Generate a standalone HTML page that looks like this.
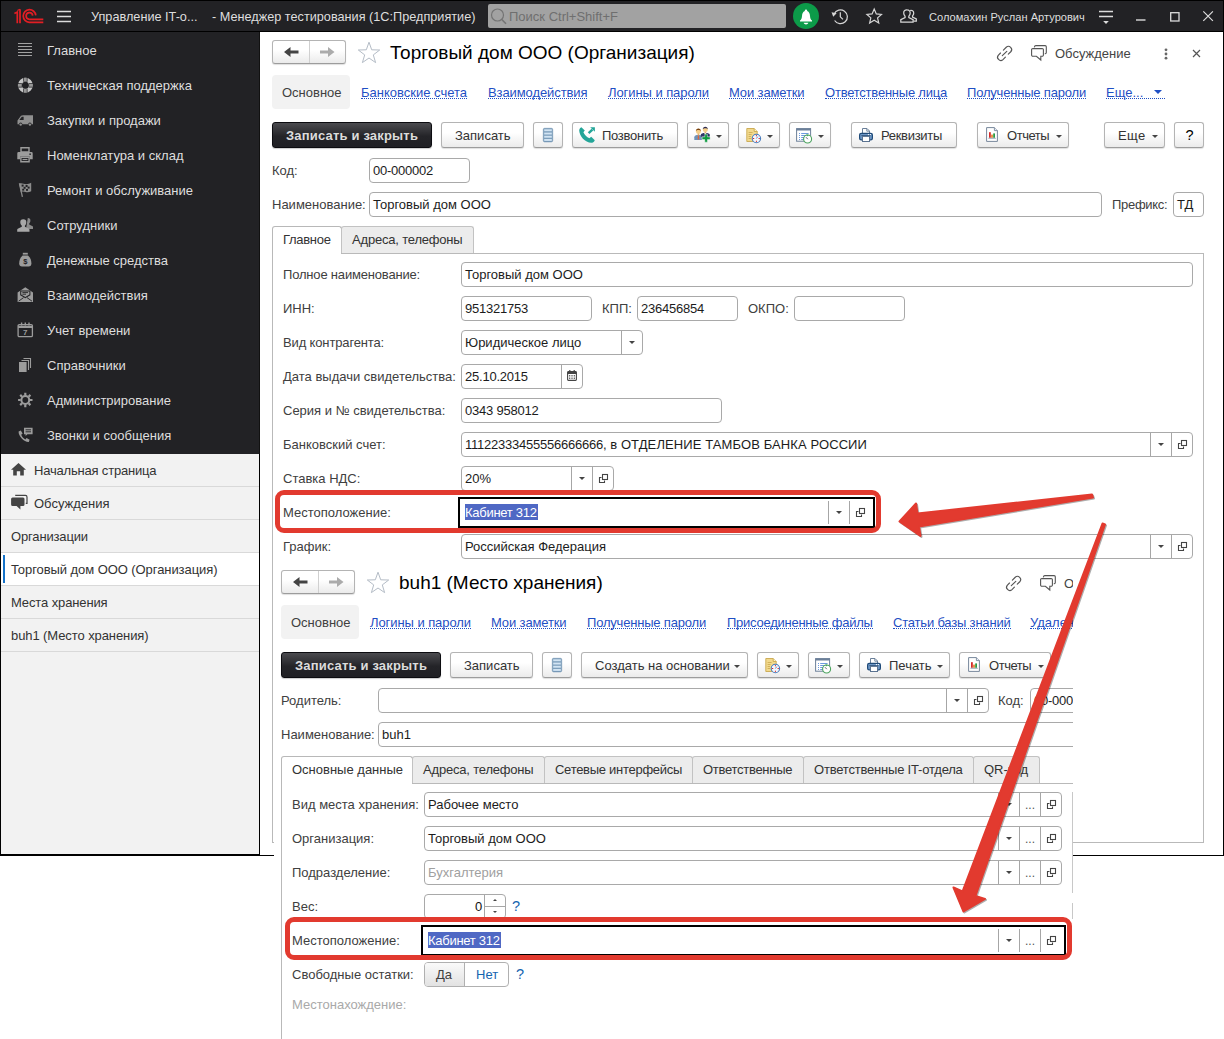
<!DOCTYPE html><html lang="ru"><head><meta charset="utf-8"><title>1C</title><style>
*{box-sizing:border-box;margin:0;padding:0}
html,body{width:1224px;height:1039px;overflow:hidden;background:#fff}
body{font-family:"Liberation Sans",sans-serif;font-size:13px;color:#333;position:relative}
.a{position:absolute;white-space:nowrap}
svg{position:absolute;overflow:visible}
.t{position:absolute;white-space:nowrap;line-height:16px;height:16px;color:#404040}
.in{position:absolute;border:1px solid #a9a9a9;border-radius:4px;background:#fff;white-space:nowrap;line-height:23px;padding-left:3px;color:#1c1c1c;overflow:hidden;height:25px}
.btn{position:absolute;border:1px solid #b4b4b4;border-bottom-color:#9c9c9c;border-radius:3px;background:linear-gradient(#ffffff 40%,#ebebeb);box-shadow:0 1px 1px rgba(0,0,0,.13);white-space:nowrap;line-height:25px;color:#333;height:26px}
.btn span{position:absolute;top:0}
.dark{background:linear-gradient(#4b4b4f,#242428 55%,#202024);border-color:#0c0c10;color:#dcdcdc;box-shadow:0 1px 1px rgba(0,0,0,.2);font-weight:bold;letter-spacing:.180px}
.lnk{position:absolute;white-space:nowrap;color:#1f4fc4;line-height:16px;border-bottom:1px dotted #1f4fc4;height:14px}
.sb{position:absolute;left:47px;color:#dedede;white-space:nowrap;line-height:16px}
.ow{position:absolute;left:1px;width:258px;height:33px;border-bottom:1px solid #d9d9d9;line-height:34px;color:#333;white-space:nowrap}
.tab{position:absolute;border:1px solid #c2c2c2;border-bottom:0;background:#ececec;line-height:26px;height:27px;color:#333;white-space:nowrap;border-radius:3px 3px 0 0;padding-left:10px}
.tab.act{background:#fff;height:28px;border-color:#b8b8b8}
.dd{position:absolute;top:0;bottom:0;width:21px;border-left:1px solid #a6a6a6}
.tri{position:absolute;width:0;height:0;border:3px solid transparent;border-top:3px solid #444;border-bottom:0}
.sel{background:#4f68c4;color:#fff;display:inline-block;line-height:17px;height:16px;padding-right:1px;letter-spacing:-.280px}
</style></head><body>
<div class="a" style="left:0;top:0;width:1224px;height:856px;background:#fff;border:1px solid #000"></div>
<div class="a" style="left:0;top:0;width:1224px;height:32px;background:#222225;border:1px solid #000"></div>
<div class="a" style="left:0;top:32px;width:260px;height:422px;background:#222225;border-right:1px solid #111;border-left:1px solid #000"></div>
<div class="a" style="left:0;top:454px;width:260px;height:402px;background:#f2f2f2;border-right:1px solid #000;border-left:1px solid #000;border-bottom:2px solid #000"></div>
<svg style="left:14px;top:9px" width="30" height="15" viewBox="0 0 30 15" ><g fill="none" stroke="#e31e24" stroke-width="1.700"><path d="M.4 4.600L3.300 3.100V14.200M6 .3V14.200"/><path d="M21.800 6.400A6.300 6.300 0 1 0 15.300 13.300H29.300"/><path d="M18.700 6.600A3.300 3.300 0 1 0 15.300 10.300H29.300"/></g><path d="M3.300 1.500L6 .3" stroke="#e31e24" stroke-width="1.200"/></svg>
<svg style="left:57px;top:10px" width="14" height="13" viewBox="0 0 14 13" ><path d="M0 1.5H14M0 6.5H14M0 11.5H14" stroke="#dcdcdc" stroke-width="1.4"/></svg>
<div class="t" style="left:91px;top:9px;color:#dedede;font-size:12.700px">Управление IT-о...</div>
<div class="t" style="left:212px;top:9px;color:#dedede;font-size:12.700px">- Менеджер тестирования (1С:Предприятие)</div>
<div class="a" style="left:488px;top:4px;width:298px;height:24px;background:#a2a2a2;border-radius:2px"></div>
<svg style="left:490px;top:7px" width="18" height="18" viewBox="0 0 18 18" ><circle cx="7.5" cy="8" r="6" fill="none" stroke="#747474" stroke-width="1.2"/><path d="M11.8 12.5L16 16.8" stroke="#747474" stroke-width="1.6"/></svg>
<div class="t" style="left:509px;top:9px;color:#6f6f6f">Поиск Ctrl+Shift+F</div>
<div class="a" style="left:793px;top:3px;width:26px;height:26px;border-radius:13px;background:#0c9b49"></div>
<svg style="left:798px;top:8.7px" width="16" height="17" viewBox="0 0 16 17" ><path d="M8 0.6c.8 0 1.2.6 1.2 1.3 2 .8 2.6 2.6 2.8 5 .2 2.2.6 3.4 2 4.6v.9H2v-.9c1.400-1.200 1.800-2.400 2-4.600.2-2.400.8-4.200 2.800-5C6.800 1.200 7.200.6 8 .6z" fill="#fff"/><path d="M5.600 13.700h4.800c-.4 1.100-1.300 1.700-2.400 1.700s-2-.6-2.400-1.700z" fill="#fff"/></svg>
<svg style="left:830.5px;top:7.5px" width="19" height="17.1" viewBox="0 0 20 18" ><g fill="none" stroke="#d6d6d6" stroke-width="1.3"><path d="M3.300 6.200A7.300 7.300 0 1 1 3.800 13.200"/><path d="M9.800 4.500V9.300L12.600 12"/></g><path d="M0.600 4.600L6 5.600 2.300 9.300z" fill="#d6d6d6"/></svg>
<svg style="left:865.8px;top:8px" width="16.4" height="15.5" viewBox="0 0 18 17" ><path d="M9 1.200l2.300 5.300 5.700.5-4.300 3.800 1.300 5.600L9 13.400l-5 3 1.300-5.600L1 7l5.700-.5z" fill="none" stroke="#d6d6d6" stroke-width="1.3" stroke-linejoin="miter"/></svg>
<svg style="left:899.5px;top:9px" width="17.5" height="15.5" viewBox="0 0 18 16" ><g fill="none" stroke="#d6d6d6" stroke-width="1.3"><path d="M7.500 1a3 3 0 0 1 3 3.200c0 1.700-.9 2.600-1.400 3.300v1.300l4.400 2.200v2.500H.8V11l4.400-2.200V7.500C4.700 6.800 3.800 5.900 3.800 4.200A3 3 0 0 1 7.500 1z"/><path d="M10.300 1.600a2.700 2.700 0 0 1 3.800 2.700c0 1.500-.7 2.200-1.200 2.900v1.100l3.900 2v2.300h-3"/></g></svg>
<div class="t" style="left:929px;top:9px;color:#dedede;font-size:11.100px">Соломахин Руслан Артурович</div>
<svg style="left:1099px;top:10px" width="14" height="15" viewBox="0 0 14 15" ><path d="M0 1.500H14M0 6.500H14" stroke="#dcdcdc" stroke-width="1.4"/><path d="M4.200 11h5.600L7 14z" fill="#dcdcdc"/></svg>
<svg style="left:1136px;top:19px" width="10" height="2" viewBox="0 0 10 2" ><path d="M0 1H9.500" stroke="#dcdcdc" stroke-width="1.4"/></svg>
<svg style="left:1170px;top:12px" width="10" height="10" viewBox="0 0 10 10" ><rect x=".7" y=".7" width="8.300" height="8.300" fill="none" stroke="#dcdcdc" stroke-width="1.300"/></svg>
<svg style="left:1203px;top:11px" width="10" height="10" viewBox="0 0 10 10" ><path d="M.3.300L9.900 9.900M9.900.3L.3 9.900" stroke="#dcdcdc" stroke-width="1.2"/></svg>
<div class="sb" style="top:43px">Главное</div>
<svg style="left:17px;top:42px" width="16" height="16" viewBox="0 0 16 16" ><path d="M1 1.500H15M1 4.500H15M1 7.500H15M1 10.500H15M1 13.500H15" stroke="#a2a2a2" stroke-width="1"/></svg>
<div class="sb" style="top:78px">Техническая поддержка</div>
<svg style="left:17px;top:77px" width="16" height="16" viewBox="0 0 16 16" ><circle cx="8.400" cy="8.300" r="5.500" fill="none" stroke="#c6c6c6" stroke-width="4"/><path d="M8.400 .8V4.800M8.400 11.800V15.800M.9 8.300H4.900M11.900 8.300H15.900" stroke="#222225" stroke-width="4.200"/><path d="M8.400 .8V4.600M8.400 12V15.800M.9 8.300H4.700M12.100 8.300H15.900" stroke="#979797" stroke-width="2.800"/></svg>
<div class="sb" style="top:113px">Закупки и продажи</div>
<svg style="left:17px;top:112px" width="16" height="16" viewBox="0 0 16 16" ><path d="M6 3.200H16V12.300H14.600a1.700 1.700 0 0 0-3.400 0H5.400a1.700 1.700 0 0 0-3.400 0H.5V8.500L4 3.800z" fill="#8f8f8f"/><path d="M2.300 8L4.800 4.800H6.600V8z" fill="#222225"/><circle cx="3.700" cy="12.600" r="1.200" fill="#8f8f8f"/><circle cx="12.900" cy="12.600" r="1.200" fill="#8f8f8f"/></svg>
<div class="sb" style="top:148px">Номенклатура и склад</div>
<svg style="left:17px;top:147px" width="16" height="16" viewBox="0 0 16 16" ><path d="M4 .8H12V5H4z" fill="none" stroke="#9c9c9c" stroke-width="1.400"/><path d="M1.500 5H14.500a1.200 1.200 0 0 1 1.200 1.200V12.200H12.800V9.500H3.200V12.200H.3V6.200A1.200 1.200 0 0 1 1.500 5z" fill="#9c9c9c"/><path d="M3.900 10.300H12.100V14.800H3.900z" fill="none" stroke="#9c9c9c" stroke-width="1.400"/><path d="M5.500 12.500H10.500" stroke="#9c9c9c" stroke-width="1.200"/><rect x="12.300" y="6.500" width="1.600" height="1.400" fill="#222225"/></svg>
<div class="sb" style="top:183px">Ремонт и обслуживание</div>
<svg style="left:17px;top:182px" width="16" height="16" viewBox="0 0 16 16" ><path d="M2.200 1.600C5 .2 7.500 2.800 10.600 2 12 1.700 13.200 1.200 14.200 .8V9.200C12.400 10.200 10.400 10.600 8.600 10 6.800 9.400 5 9.200 3.800 10z" fill="#8c8c8c"/><path d="M2.400 1.400L5.400 14.800" stroke="#8c8c8c" stroke-width="1.300"/><g fill="#222225"><rect x="4.600" y="2.600" width="2" height="2"/><rect x="8.600" y="3" width="2" height="2"/><rect x="6.600" y="4.800" width="2" height="2"/><rect x="10.600" y="4.600" width="2" height="2"/><rect x="5.200" y="6.800" width="2" height="1.800"/><rect x="9" y="7" width="2" height="1.800"/></g></svg>
<div class="sb" style="top:218px">Сотрудники</div>
<svg style="left:17px;top:217px" width="16" height="16" viewBox="0 0 16 16" ><path d="M10.800 1a2.600 2.600 0 0 1 2.600 2.800c0 1.500-.8 2.200-1.200 2.800v1l3.400 1.600c.3.200.4.500.4.800V12H9z" fill="#8a8a8a"/><path d="M6.300 2.200a3 3 0 0 1 3 3.200c0 1.700-.9 2.500-1.400 3.200v1.200l4 2c.4.200.6.600.6 1v2H.2v-2c0-.4.200-.8.600-1l4-2V8.600C4.300 7.900 3.300 7.100 3.300 5.400a3 3 0 0 1 3-3.200z" fill="#a8a8a8"/></svg>
<div class="sb" style="top:253px">Денежные средства</div>
<svg style="left:17px;top:252px" width="16" height="16" viewBox="0 0 16 16" ><path d="M5.800 .8H10.800V2.600H5.800z" fill="#9c9c9c"/><path d="M5.600 3.600H11C13.400 5.600 14.400 8.600 14.400 11.400 14.400 13.400 13.400 14.400 11.600 14.400H5C3.200 14.400 2.200 13.400 2.200 11.400 2.200 8.600 3.200 5.600 5.600 3.600z" fill="#9c9c9c"/><text x="8.300" y="12.300" font-size="7.500" font-weight="bold" text-anchor="middle" fill="#222225" font-family="Liberation Sans,sans-serif">$</text></svg>
<div class="sb" style="top:288px">Взаимодействия</div>
<svg style="left:17px;top:287px" width="16" height="16" viewBox="0 0 16 16" ><path d="M8.300 .3L16 5.600V15H.6V5.600z" fill="#9c9c9c"/><path d="M3.200 3.600H13.400V8.200L8.300 11.200 3.200 8.200z" fill="#222225"/><path d="M4.200 4.400H12.400V7.600L8.300 10 4.200 7.600z" fill="#9c9c9c"/><path d="M5.400 5.600H11M5.400 7.200H9" stroke="#222225" stroke-width=".9"/><path d="M1.600 14.200L6.600 10.600M15 14.200L10 10.600" stroke="#222225" stroke-width=".9"/></svg>
<div class="sb" style="top:323px">Учет времени</div>
<svg style="left:17px;top:322px" width="16" height="16" viewBox="0 0 16 16" ><rect x="1.100" y="2.600" width="14.300" height="12" rx="1.200" fill="none" stroke="#9c9c9c" stroke-width="1.300"/><path d="M1.100 3.800H15.400V6H1.100z" fill="#9c9c9c"/><path d="M4.600 .6V3.600M8.300 .6V3.600M12 .6V3.600" stroke="#9c9c9c" stroke-width="1.400"/><text x="8.300" y="13.400" font-size="8" font-weight="bold" text-anchor="middle" fill="#9c9c9c" font-family="Liberation Sans,sans-serif">7</text></svg>
<div class="sb" style="top:358px">Справочники</div>
<svg style="left:17px;top:357px" width="16" height="16" viewBox="0 0 16 16" ><path d="M6.500 1.500H13.500V11" fill="none" stroke="#9c9c9c" stroke-width="1.100"/><path d="M4.500 3.500H11.500V13" fill="none" stroke="#9c9c9c" stroke-width="1.100"/><path d="M2 5H9.600V15H2z" fill="#9c9c9c"/></svg>
<div class="sb" style="top:393px">Администрирование</div>
<svg style="left:17px;top:392px" width="16" height="16" viewBox="0 0 16 16" ><circle cx="8.300" cy="8" r="3.900" fill="none" stroke="#9c9c9c" stroke-width="2"/><g stroke="#9c9c9c" stroke-width="2.200"><path d="M8.300 .8V3.400M8.300 12.600V15.200M1.100 8H3.700M12.900 8H15.500M3.200 2.900L5 4.700M11.600 11.300L13.400 13.100M3.200 13.100L5 11.300M11.600 4.700L13.400 2.900"/></g></svg>
<div class="sb" style="top:428px">Звонки и сообщения</div>
<svg style="left:17px;top:427px" width="16" height="16" viewBox="0 0 16 16" ><path d="M7 .8H15.600V7.200H10.400L8.600 9V7.200H7z" fill="#9c9c9c"/><path d="M8.600 2.800H14M8.600 4.800H14" stroke="#222225" stroke-width=".9"/><path d="M1.600 4.400L3.800 3.600 5.600 6.600 4.200 7.800C5 9.800 6.400 11.400 8.400 12.400L9.600 11 12.600 12.800 11.800 15C7.600 15.400 1.200 9 1.600 4.400z" fill="#9c9c9c"/></svg>
<div class="ow" style="top:454px;padding-left:33px;letter-spacing:-0.190px">Начальная страница</div>
<div class="ow" style="top:487px;padding-left:33px">Обсуждения</div>
<div class="ow" style="top:520px;padding-left:10px;letter-spacing:-0.160px">Организации</div>
<div class="ow" style="top:553px;padding-left:10px;background:#fff;letter-spacing:-0.070px">Торговый дом ООО (Организация)</div>
<div class="ow" style="top:586px;padding-left:10px;letter-spacing:-0.120px">Места хранения</div>
<div class="ow" style="top:619px;padding-left:10px;letter-spacing:-0.090px">buh1 (Место хранения)</div>
<div class="a" style="left:3px;top:555px;width:2px;height:28px;background:#1673c9"></div>
<svg style="left:11px;top:463px" width="15" height="13" viewBox="0 0 15 13" ><path d="M7.500 0L15 6.800H12.800V12.600H9.200V8.200H5.800V12.600H2.200V6.800H0z" fill="#444"/></svg>
<svg style="left:11px;top:495px" width="16" height="16" viewBox="0 0 16 16" ><path d="M4.200 .4H14.400a1.600 1.600 0 0 1 1.600 1.600V8.400H14.800" fill="none" stroke="#444" stroke-width="1.200"/><path d="M1.600 2.400H12a1.500 1.500 0 0 1 1.500 1.500V9.600a1.500 1.500 0 0 1-1.500 1.500H9.400V14.600L5.600 11.100H1.600A1.500 1.500 0 0 1 .1 9.600V3.900A1.500 1.500 0 0 1 1.600 2.400z" fill="#444"/></svg>
<div class="btn" style="left:272px;top:40px;width:74px;height:24px"></div>
<div class="a" style="left:309px;top:41px;width:1px;height:22px;background:#d0d0d0"></div>
<svg style="left:284px;top:47px" width="15" height="10" viewBox="0 0 15 10" ><path d="M0 5L6.500 0V3.400H14.500V6.600H6.500V10z" fill="#444"/></svg>
<svg style="left:320px;top:47px" width="15" height="10" viewBox="0 0 15 10" ><path d="M14.500 5L8 0V3.400H0V6.600H8V10z" fill="#ababab"/></svg>
<svg style="left:356.5px;top:41px" width="24" height="23" viewBox="0 0 24 23" ><path d="M12 1.200l2.700 7.600 8 .2-6.400 4.900 2.300 7.700L12 17l-6.600 4.600 2.300-7.700L1.300 9l8-.2z" fill="#fff" stroke="#b4bcc6" stroke-width="1"/></svg>
<div class="t" style="left:390px;top:41px;font-size:19px;color:#000;line-height:24px;height:24px">Торговый дом ООО (Организация)</div>
<svg style="left:997px;top:46px" width="16" height="15" viewBox="0 0 16 15" ><g fill="none" stroke="#555" stroke-width="1.150" stroke-linecap="round"><path d="M6.400 4.100L9.240 1.240A3.200 3.200 0 0 1 13.760 5.760L11.300 8.200"/><path d="M3.500 7L1.440 9.040A3.200 3.200 0 0 0 5.960 13.560L8.400 11.100"/><path d="M5.300 9.700L9.800 5.300"/></g></svg>
<svg style="left:1031px;top:45px" width="17" height="16" viewBox="0 0 17 16" ><g fill="none" stroke="#555" stroke-width="1.100" stroke-linecap="round"><path d="M3.400 2Q3.600 .6 4.800 .6H14.100a1.200 1.200 0 0 1 1.200 1.200V7.400Q15.300 8.600 14.200 8.800"/><path d="M1.800 3.600H11.200a1.200 1.200 0 0 1 1.200 1.200V10.100a1.200 1.200 0 0 1-1.200 1.200H9.800V15L5.400 11.300H1.800a1.200 1.200 0 0 1-1.200-1.200V4.800a1.200 1.200 0 0 1 1.200-1.200z"/></g></svg>
<div class="t" style="left:1055px;top:46px;color:#444">Обсуждение</div>
<svg style="left:1164px;top:48px" width="4" height="12" viewBox="0 0 4 12" ><circle cx="2" cy="1.800" r="1.400" fill="#666"/><circle cx="2" cy="6" r="1.400" fill="#666"/><circle cx="2" cy="10.200" r="1.400" fill="#666"/></svg>
<svg style="left:1192px;top:49px" width="9" height="9" viewBox="0 0 9 9" ><path d="M1 1L8 8M8 1L1 8" stroke="#555" stroke-width="1.200"/></svg>
<div class="a" style="left:272px;top:75px;width:78px;height:34px;background:#f2f2f2;border-radius:4px"></div>
<div class="t" style="left:282px;top:85px;">Основное</div>
<div class="lnk" style="left:361px;top:85px;">Банковские счета</div>
<div class="lnk" style="left:488px;top:85px;letter-spacing:-0.090px;">Взаимодействия</div>
<div class="lnk" style="left:608px;top:85px;letter-spacing:-0.070px;">Логины и пароли</div>
<div class="lnk" style="left:729px;top:85px;letter-spacing:-0.130px;">Мои заметки</div>
<div class="lnk" style="left:825px;top:85px;letter-spacing:-0.220px;">Ответственные лица</div>
<div class="lnk" style="left:967px;top:85px;letter-spacing:-0.190px;">Полученные пароли</div>
<div class="lnk" style="left:1106px;top:85px;width:59px">Еще...</div>
<div class="tri" style="left:1154px;top:90px;border-width:4.500px;border-top-color:#1f4fc4;border-bottom:0"></div>
<div class="btn dark" style="left:272px;top:122px;width:160px;"><span style="left:13px;">Записать и закрыть</span></div>
<div class="btn " style="left:441px;top:122px;width:83px;"><span style="left:13px;">Записать</span></div>
<div class="btn " style="left:533px;top:122px;width:30px;"></div>
<svg style="left:543px;top:128px" width="11" height="15" viewBox="0 0 11 15" ><rect x=".3" y=".3" width="9.400" height="13.600" rx="1.300" fill="#7d9fbc" stroke="#6c8eae" stroke-width=".6"/><g fill="#d2e4f3"><rect x="1.200" y="1.300" width="7.600" height="1.900"/><rect x="1.200" y="4.600" width="7.600" height="1.900"/><rect x="1.200" y="7.800" width="7.600" height="1.900"/><rect x="1.200" y="11" width="7.600" height="1.900"/></g></svg>
<div class="btn " style="left:572px;top:122px;width:106px;"><span style="left:29px;letter-spacing:-0.280px;">Позвонить</span></div>
<svg style="left:579px;top:127px" width="16" height="16" viewBox="0 0 16 16" ><path d="M2.400 .2L5.800 3.600 4.400 5.200C5.400 7.600 7.800 10 10.400 11.200L12.200 9.800 15.800 13.200C15 15 13.600 15.800 12.400 15.800 6 15.400.4 9 .2 3.400.2 2 1.200.8 2.400.2z" fill="#23a598"/><path d="M9.600 6.200L13.400 2.600" stroke="#23a598" stroke-width="2.400"/><path d="M11.200 .2H15.900V4.800z" fill="#23a598"/></svg>
<div class="btn " style="left:687px;top:122px;width:42px;"></div>
<svg style="left:694px;top:126px" width="16" height="17" viewBox="0 0 16 17" ><path d="M.3 14V11.200C.3 9.600 1.800 9 4.400 9S8 9.600 8 11.200V14z" fill="#6f93b8"/><path d="M3.900 9.200H5L5.200 13.600H3.700z" fill="#e0643c"/><rect x="3.600" y="7" width="1.700" height="2.400" fill="#e2b170"/><circle cx="4.400" cy="5.300" r="2.500" fill="#f4cf8a"/><path d="M1.900 5C1.700 1.600 7.100 1.600 6.900 5 6 3.600 2.800 3.600 1.900 5z" fill="#7a4310"/><path d="M6.800 10.800V9C6.800 7.600 8.600 7 11.300 7S15.800 7.600 15.800 9V10.800z" fill="#2e3566"/><path d="M10.200 7L11.300 9 12.400 7z" fill="#fff"/><rect x="10.500" y="5.200" width="1.700" height="2.200" fill="#e2b170"/><circle cx="11.300" cy="3.500" r="2.500" fill="#f4cf8a"/><path d="M8.800 3.200C8.600-.2 14-.2 13.800 3.200 12.900 1.800 9.700 1.800 8.800 3.200z" fill="#2b2a52"/><path d="M10.800 8.200H13.400V10.900H16.100V13.600H13.400V16.200H10.800V13.600H8.100V10.900H10.800z" fill="#0b9a3e" stroke="#fff" stroke-width=".4"/></svg>
<div class="tri" style="left:716px;top:135px;border-top-color:#444"></div>
<div class="btn " style="left:738px;top:122px;width:42px;"></div>
<svg style="left:746px;top:128px" width="16" height="16" viewBox="0 0 16 16" ><path d="M.8.500H8.200L11.200 3.500V13.500H.8z" fill="#f2d98d" stroke="#c9a84e" stroke-width=".9"/><path d="M8.200.5V3.500H11.200" fill="#fff3c4" stroke="#c9a84e" stroke-width=".9"/><path d="M2.600 4.500H6.600M2.600 6.500H5.600M2.600 8.500H5M2.600 10.500H5" stroke="#c9a84e" stroke-width=".8"/><circle cx="10.400" cy="10.500" r="4.200" fill="#f4f8fd" stroke="#4a7dbd" stroke-width="1.100"/><g fill="#e02020"><rect x="9.900" y="7.100" width="1" height="1.200"/><rect x="9.900" y="12.700" width="1" height="1.200"/><rect x="7" y="10" width="1.200" height="1"/><rect x="12.600" y="10" width="1.200" height="1"/></g><path d="M10.400 10.500L11.800 8.600" stroke="#4a7dbd" stroke-width=".9"/></svg>
<div class="tri" style="left:767px;top:135px;border-top-color:#444"></div>
<div class="btn " style="left:789px;top:122px;width:42px;"></div>
<svg style="left:796px;top:128px" width="16" height="16" viewBox="0 0 16 16" ><rect x=".6" y=".6" width="14" height="12.600" fill="#fff" stroke="#6b7f99" stroke-width="1"/><rect x=".6" y=".6" width="14" height="1.900" fill="#6b7f99"/><path d="M3 5.500H4M5.200 5.500H12.600M3 7.500H4M5.200 7.500H11M3 9.500H4M5.200 9.500H9M3 11.500H4M5.200 11.500H8" stroke="#5b8fd9" stroke-width=".9"/><circle cx="11.600" cy="11" r="4" fill="#fff" stroke="#4aa35c" stroke-width="1.100"/><path d="M11.800 11.200L10 9.200" stroke="#556" stroke-width=".9"/><path d="M10.400 6.300L12.800 7 11.200 8.600z" fill="#4aa35c"/></svg>
<div class="tri" style="left:818px;top:135px;border-top-color:#444"></div>
<div class="btn " style="left:851px;top:122px;width:106px;"><span style="left:29px;letter-spacing:-0.300px;">Реквизиты</span></div>
<svg style="left:859px;top:128px" width="15" height="14" viewBox="0 0 15 14" ><path d="M3.500 5.500V.5H8L10.500 3V5.500" fill="#fff" stroke="#6a7f99" stroke-width="1"/><path d="M7.800 .8V3.200H10.200" fill="none" stroke="#6a7f99" stroke-width=".9"/><rect x=".6" y="5.400" width="12.800" height="6.400" rx="1.600" fill="#6d97c6" stroke="#1f4a78" stroke-width="1.200"/><path d="M2.400 7.600H11.600" stroke="#2b4f78" stroke-width=".9"/><rect x="8.900" y="6.100" width="1.100" height="1" fill="#fff"/><rect x="10.900" y="6.100" width="1.100" height="1" fill="#fff"/><rect x="3.500" y="8.400" width="7" height="5.100" fill="#fff" stroke="#5a7290" stroke-width="1"/></svg>
<div class="btn " style="left:977px;top:122px;width:92px;"><span style="left:29px;letter-spacing:-0.450px;">Отчеты</span></div>
<svg style="left:986px;top:127px" width="13" height="15" viewBox="0 0 13 15" ><path d="M.6.600H8.400L11.400 3.600V14.400H.6z" fill="#fff" stroke="#77879b" stroke-width="1"/><path d="M8.400.6V3.600H11.400" fill="#e8edf4" stroke="#77879b" stroke-width=".9"/><rect x="3" y="5.200" width="1.800" height="5.600" fill="#d62a2a"/><rect x="5.200" y="7.600" width="1.600" height="3.200" fill="#e07a1f"/><rect x="7.200" y="6.400" width="1.800" height="4.400" fill="#2c9a44"/><path d="M2.400 11.300H9.800" stroke="#8796a8" stroke-width=".8"/></svg>
<div class="tri" style="left:1056px;top:135px;border-top-color:#444"></div>
<div class="btn " style="left:1104px;top:122px;width:61px;"><span style="left:13px;letter-spacing:0.400px;">Еще</span></div>
<div class="tri" style="left:1152px;top:135px;border-top-color:#444"></div>
<div class="btn " style="left:1174px;top:122px;width:30px;color:#000;font-size:14.500px"><span style="left:10.5px;">?</span></div>
<div class="t" style="left:272px;top:163px;">Код:</div>
<div class="in" style="left:369px;top:158px;width:101px;"><span style="letter-spacing:-.230px">00-000002</span></div>
<div class="t" style="left:272px;top:197px;">Наименование:</div>
<div class="in" style="left:369px;top:192px;width:733px;">Торговый дом ООО</div>
<div class="t" style="left:1112px;top:197px;letter-spacing:-0.300px;">Префикс:</div>
<div class="in" style="left:1173px;top:192px;width:31px;">ТД</div>
<div class="a" style="left:272px;top:253px;width:932px;height:590px;border:1px solid #b9b9b9"></div>
<div class="tab act" style="left:272px;top:226px;width:70px;letter-spacing:-0.290px;">Главное</div>
<div class="tab" style="left:341px;top:226px;width:133px;letter-spacing:-0.190px;">Адреса, телефоны</div>
<div class="t" style="left:283px;top:267px;letter-spacing:-0.180px;">Полное наименование:</div>
<div class="t" style="left:283px;top:301px;">ИНН:</div>
<div class="t" style="left:283px;top:335px;letter-spacing:-0.140px;">Вид контрагента:</div>
<div class="t" style="left:283px;top:369px;">Дата выдачи свидетельства:</div>
<div class="t" style="left:283px;top:403px;">Серия и № свидетельства:</div>
<div class="t" style="left:283px;top:437px;">Банковский счет:</div>
<div class="t" style="left:283px;top:471px;">Ставка НДС:</div>
<div class="t" style="left:283px;top:505px;">Местоположение:</div>
<div class="t" style="left:283px;top:539px;">График:</div>
<div class="in" style="left:461px;top:262px;width:732px;">Торговый дом ООО</div>
<div class="in" style="left:461px;top:296px;width:131px;"><span style="letter-spacing:-.230px">951321753</span></div>
<div class="t" style="left:602px;top:301px;">КПП:</div>
<div class="in" style="left:637px;top:296px;width:101px;"><span style="letter-spacing:-.230px">236456854</span></div>
<div class="t" style="left:748px;top:301px;">ОКПО:</div>
<div class="in" style="left:794px;top:296px;width:111px;"></div>
<div class="in" style="left:461px;top:330px;width:182px;">Юридическое лицо</div>
<div class="a" style="left:621px;top:331px;width:1px;height:23px;background:#a6a6a6"></div>
<div class="tri" style="left:628.5px;top:341px;border-top-color:#444"></div>
<div class="in" style="left:461px;top:364px;width:122px;"><span style="letter-spacing:-.230px">25.10.2015</span></div>
<div class="a" style="left:561px;top:365px;width:1px;height:23px;background:#a6a6a6"></div>
<svg style="left:567px;top:370px" width="10" height="11" viewBox="0 0 10 11" ><rect x=".6" y="1.600" width="8.800" height="8.800" rx=".8" fill="#fff" stroke="#444" stroke-width="1.100"/><path d="M.6 2H9.400V4H.6z" fill="#444"/><path d="M2.800 0V2M7.200 0V2" stroke="#444" stroke-width="1.200"/><g fill="#444"><rect x="2" y="5.200" width="1.300" height="1.200"/><rect x="4.350" y="5.200" width="1.300" height="1.200"/><rect x="6.700" y="5.200" width="1.300" height="1.200"/><rect x="2" y="7.600" width="1.300" height="1.200"/><rect x="4.350" y="7.600" width="1.300" height="1.200"/><rect x="6.700" y="7.600" width="1.300" height="1.200"/></g></svg>
<div class="in" style="left:461px;top:398px;width:261px;"><span style="letter-spacing:-.230px">0343 958012</span></div>
<div class="in" style="left:461px;top:432px;width:732px;"><span style="letter-spacing:-.230px">11122333455556666666,</span><span style="letter-spacing:.1px"> в ОТДЕЛЕНИЕ ТАМБОВ БАНКА РОССИИ</span></div>
<div class="a" style="left:1171px;top:433px;width:1px;height:23px;background:#a6a6a6"></div>
<div class="a" style="left:1150px;top:433px;width:1px;height:23px;background:#a6a6a6"></div>
<div class="tri" style="left:1157.5px;top:443px;border-top-color:#444"></div>
<svg style="left:1177px;top:440px" width="10" height="9" viewBox="0 0 10 9" ><path d="M3.500 3.500H1.500V8.500H6.500V6.500" fill="none" stroke="#444" stroke-width="1.100"/><rect x="4.500" y=".5" width="5" height="5" fill="none" stroke="#444" stroke-width="1.100"/></svg>
<div class="in" style="left:461px;top:466px;width:153px;">20%</div>
<div class="a" style="left:592px;top:467px;width:1px;height:23px;background:#a6a6a6"></div>
<div class="a" style="left:571px;top:467px;width:1px;height:23px;background:#a6a6a6"></div>
<div class="tri" style="left:578.5px;top:477px;border-top-color:#444"></div>
<svg style="left:598px;top:474px" width="10" height="9" viewBox="0 0 10 9" ><path d="M3.500 3.500H1.500V8.500H6.500V6.500" fill="none" stroke="#444" stroke-width="1.100"/><rect x="4.500" y=".5" width="5" height="5" fill="none" stroke="#444" stroke-width="1.100"/></svg>
<div class="a" style="left:458px;top:497px;width:417px;height:31px;border:2px solid #000;background:#fff"></div>
<div class="a" style="left:465px;top:504px;line-height:17px"><span class="sel">Кабинет 312</span></div>
<div class="a" style="left:828px;top:501px;width:1px;height:23px;background:#a6a6a6"></div>
<div class="a" style="left:849px;top:501px;width:1px;height:23px;background:#a6a6a6"></div>
<div class="tri" style="left:835.5px;top:511px;border-top-color:#444"></div>
<svg style="left:855px;top:508px" width="10" height="9" viewBox="0 0 10 9" ><path d="M3.500 3.500H1.500V8.500H6.500V6.500" fill="none" stroke="#444" stroke-width="1.100"/><rect x="4.500" y=".5" width="5" height="5" fill="none" stroke="#444" stroke-width="1.100"/></svg>
<div class="in" style="left:461px;top:534px;width:732px;">Российская Федерация</div>
<div class="a" style="left:1171px;top:535px;width:1px;height:23px;background:#a6a6a6"></div>
<div class="a" style="left:1150px;top:535px;width:1px;height:23px;background:#a6a6a6"></div>
<div class="tri" style="left:1157.5px;top:545px;border-top-color:#444"></div>
<svg style="left:1177px;top:542px" width="10" height="9" viewBox="0 0 10 9" ><path d="M3.500 3.500H1.500V8.500H6.500V6.500" fill="none" stroke="#444" stroke-width="1.100"/><rect x="4.500" y=".5" width="5" height="5" fill="none" stroke="#444" stroke-width="1.100"/></svg>
<div class="a" style="left:275px;top:490px;width:606px;height:43px;border:5px solid #e23a2f;border-radius:9px"></div>
<div class="a" style="left:274px;top:563px;width:799px;height:476px;background:#fff;overflow:hidden">
<div class="btn" style="left:7px;top:7px;width:74px;height:24px"></div>
<div class="a" style="left:44px;top:8px;width:1px;height:22px;background:#d0d0d0"></div>
<svg style="left:19px;top:14px" width="15" height="10" viewBox="0 0 15 10" ><path d="M0 5L6.500 0V3.400H14.500V6.600H6.500V10z" fill="#444"/></svg>
<svg style="left:55px;top:14px" width="15" height="10" viewBox="0 0 15 10" ><path d="M14.500 5L8 0V3.400H0V6.600H8V10z" fill="#ababab"/></svg>
<svg style="left:91.5px;top:8px" width="24" height="23" viewBox="0 0 24 23" ><path d="M12 1.200l2.700 7.600 8 .2-6.400 4.900 2.300 7.700L12 17l-6.600 4.600 2.300-7.700L1.300 9l8-.2z" fill="#fff" stroke="#b4bcc6" stroke-width="1"/></svg>
<div class="t" style="left:125px;top:8px;font-size:19px;color:#000;line-height:24px;height:24px">buh1 (Место хранения)</div>
<svg style="left:732px;top:13px" width="16" height="15" viewBox="0 0 16 15" ><g fill="none" stroke="#555" stroke-width="1.150" stroke-linecap="round"><path d="M6.400 4.100L9.240 1.240A3.200 3.200 0 0 1 13.760 5.760L11.300 8.200"/><path d="M3.500 7L1.440 9.040A3.200 3.200 0 0 0 5.960 13.560L8.400 11.100"/><path d="M5.300 9.700L9.800 5.300"/></g></svg>
<svg style="left:766px;top:12px" width="17" height="16" viewBox="0 0 17 16" ><g fill="none" stroke="#555" stroke-width="1.100" stroke-linecap="round"><path d="M3.400 2Q3.600 .6 4.800 .6H14.100a1.200 1.200 0 0 1 1.200 1.200V7.400Q15.300 8.600 14.200 8.800"/><path d="M1.800 3.600H11.200a1.200 1.200 0 0 1 1.200 1.200V10.100a1.200 1.200 0 0 1-1.200 1.200H9.800V15L5.400 11.300H1.800a1.200 1.200 0 0 1-1.200-1.200V4.800a1.200 1.200 0 0 1 1.200-1.200z"/></g></svg>
<div class="t" style="left:790px;top:13px;color:#444">Обсуждение</div>
<div class="a" style="left:7px;top:42px;width:78px;height:34px;background:#f2f2f2;border-radius:4px"></div>
<div class="t" style="left:17px;top:52px;">Основное</div>
<div class="lnk" style="left:96px;top:52px;letter-spacing:-0.070px;">Логины и пароли</div>
<div class="lnk" style="left:217px;top:52px;letter-spacing:-0.130px;">Мои заметки</div>
<div class="lnk" style="left:313px;top:52px;letter-spacing:-0.190px;">Полученные пароли</div>
<div class="lnk" style="left:453px;top:52px;letter-spacing:-0.250px;">Присоединенные файлы</div>
<div class="lnk" style="left:619px;top:52px;letter-spacing:-0.190px;">Статьи базы знаний</div>
<div class="lnk" style="left:756px;top:52px;">Удаленные</div>
<div class="btn dark" style="left:7px;top:89px;width:160px;"><span style="left:13px;">Записать и закрыть</span></div>
<div class="btn " style="left:176px;top:89px;width:83px;"><span style="left:13px;">Записать</span></div>
<div class="btn " style="left:268px;top:89px;width:30px;"></div>
<svg style="left:278px;top:95px" width="11" height="15" viewBox="0 0 11 15" ><rect x=".3" y=".3" width="9.400" height="13.600" rx="1.300" fill="#7d9fbc" stroke="#6c8eae" stroke-width=".6"/><g fill="#d2e4f3"><rect x="1.200" y="1.300" width="7.600" height="1.900"/><rect x="1.200" y="4.600" width="7.600" height="1.900"/><rect x="1.200" y="7.800" width="7.600" height="1.900"/><rect x="1.200" y="11" width="7.600" height="1.900"/></g></svg>
<div class="btn " style="left:307px;top:89px;width:167px;"><span style="left:13px;">Создать на основании</span></div>
<div class="tri" style="left:460px;top:102px;border-top-color:#444"></div>
<div class="btn " style="left:483px;top:89px;width:42px;"></div>
<svg style="left:491px;top:95px" width="16" height="16" viewBox="0 0 16 16" ><path d="M.8.500H8.200L11.200 3.500V13.500H.8z" fill="#f2d98d" stroke="#c9a84e" stroke-width=".9"/><path d="M8.200.5V3.500H11.200" fill="#fff3c4" stroke="#c9a84e" stroke-width=".9"/><path d="M2.600 4.500H6.600M2.600 6.500H5.600M2.600 8.500H5M2.600 10.500H5" stroke="#c9a84e" stroke-width=".8"/><circle cx="10.400" cy="10.500" r="4.200" fill="#f4f8fd" stroke="#4a7dbd" stroke-width="1.100"/><g fill="#e02020"><rect x="9.900" y="7.100" width="1" height="1.200"/><rect x="9.900" y="12.700" width="1" height="1.200"/><rect x="7" y="10" width="1.200" height="1"/><rect x="12.600" y="10" width="1.200" height="1"/></g><path d="M10.400 10.500L11.800 8.600" stroke="#4a7dbd" stroke-width=".9"/></svg>
<div class="tri" style="left:512px;top:102px;border-top-color:#444"></div>
<div class="btn " style="left:534px;top:89px;width:42px;"></div>
<svg style="left:541px;top:95px" width="16" height="16" viewBox="0 0 16 16" ><rect x=".6" y=".6" width="14" height="12.600" fill="#fff" stroke="#6b7f99" stroke-width="1"/><rect x=".6" y=".6" width="14" height="1.900" fill="#6b7f99"/><path d="M3 5.500H4M5.200 5.500H12.600M3 7.500H4M5.200 7.500H11M3 9.500H4M5.200 9.500H9M3 11.500H4M5.200 11.500H8" stroke="#5b8fd9" stroke-width=".9"/><circle cx="11.600" cy="11" r="4" fill="#fff" stroke="#4aa35c" stroke-width="1.100"/><path d="M11.800 11.200L10 9.200" stroke="#556" stroke-width=".9"/><path d="M10.400 6.300L12.800 7 11.200 8.600z" fill="#4aa35c"/></svg>
<div class="tri" style="left:563px;top:102px;border-top-color:#444"></div>
<div class="btn " style="left:585px;top:89px;width:91px;"><span style="left:29px;">Печать</span></div>
<svg style="left:593px;top:95px" width="15" height="14" viewBox="0 0 15 14" ><path d="M3.500 5.500V.5H8L10.500 3V5.500" fill="#fff" stroke="#6a7f99" stroke-width="1"/><path d="M7.800 .8V3.200H10.200" fill="none" stroke="#6a7f99" stroke-width=".9"/><rect x=".6" y="5.400" width="12.800" height="6.400" rx="1.600" fill="#6d97c6" stroke="#1f4a78" stroke-width="1.200"/><path d="M2.400 7.600H11.600" stroke="#2b4f78" stroke-width=".9"/><rect x="8.900" y="6.100" width="1.100" height="1" fill="#fff"/><rect x="10.900" y="6.100" width="1.100" height="1" fill="#fff"/><rect x="3.500" y="8.400" width="7" height="5.100" fill="#fff" stroke="#5a7290" stroke-width="1"/></svg>
<div class="tri" style="left:663px;top:102px;border-top-color:#444"></div>
<div class="btn " style="left:685px;top:89px;width:92px;"><span style="left:29px;letter-spacing:-0.450px;">Отчеты</span></div>
<svg style="left:694px;top:94px" width="13" height="15" viewBox="0 0 13 15" ><path d="M.6.600H8.400L11.400 3.600V14.400H.6z" fill="#fff" stroke="#77879b" stroke-width="1"/><path d="M8.400.6V3.600H11.400" fill="#e8edf4" stroke="#77879b" stroke-width=".9"/><rect x="3" y="5.200" width="1.800" height="5.600" fill="#d62a2a"/><rect x="5.200" y="7.600" width="1.600" height="3.200" fill="#e07a1f"/><rect x="7.200" y="6.400" width="1.800" height="4.400" fill="#2c9a44"/><path d="M2.400 11.300H9.800" stroke="#8796a8" stroke-width=".8"/></svg>
<div class="tri" style="left:764px;top:102px;border-top-color:#444"></div>
<div class="t" style="left:7px;top:130px;">Родитель:</div>
<div class="in" style="left:104px;top:125px;width:611px;"></div>
<div class="a" style="left:693px;top:126px;width:1px;height:23px;background:#a6a6a6"></div>
<div class="a" style="left:672px;top:126px;width:1px;height:23px;background:#a6a6a6"></div>
<div class="tri" style="left:679.5px;top:136px;border-top-color:#444"></div>
<svg style="left:699px;top:133px" width="10" height="9" viewBox="0 0 10 9" ><path d="M3.500 3.500H1.500V8.500H6.500V6.500" fill="none" stroke="#444" stroke-width="1.100"/><rect x="4.500" y=".5" width="5" height="5" fill="none" stroke="#444" stroke-width="1.100"/></svg>
<div class="t" style="left:724px;top:130px;">Код:</div>
<div class="in" style="left:756px;top:125px;width:101px;"><span style="letter-spacing:-.230px">00-000002</span></div>
<div class="t" style="left:7px;top:164px;">Наименование:</div>
<div class="in" style="left:104px;top:159px;width:733px;">buh1</div>
<div class="a" style="left:7px;top:220px;width:932px;height:590px;border:1px solid #b9b9b9"></div>
<div class="tab act" style="left:7px;top:193px;width:132px;">Основные данные</div>
<div class="tab " style="left:138px;top:193px;width:133px;letter-spacing:-0.190px;">Адреса, телефоны</div>
<div class="tab " style="left:270px;top:193px;width:149px;letter-spacing:-0.280px;">Сетевые интерфейсы</div>
<div class="tab " style="left:418px;top:193px;width:112px;letter-spacing:-0.280px;">Ответственные</div>
<div class="tab " style="left:529px;top:193px;width:171px;letter-spacing:-0.200px;">Ответственные IT-отдела</div>
<div class="tab " style="left:699px;top:193px;width:67px;">QR-код</div>
<div class="t" style="left:18px;top:234px;">Вид места хранения:</div>
<div class="t" style="left:18px;top:268px;">Организация:</div>
<div class="t" style="left:18px;top:302px;">Подразделение:</div>
<div class="t" style="left:18px;top:336px;">Вес:</div>
<div class="t" style="left:18px;top:370px;">Местоположение:</div>
<div class="t" style="left:18px;top:404px;">Свободные остатки:</div>
<div class="t" style="left:18px;top:434px;color:#a9a9a9">Местонахождение:</div>
<div class="in" style="left:150px;top:229px;width:638px;">Рабочее место</div>
<div class="a" style="left:766px;top:230px;width:1px;height:23px;background:#a6a6a6"></div>
<div class="a" style="left:745px;top:230px;width:1px;height:23px;background:#a6a6a6"></div>
<div class="a" style="left:724px;top:230px;width:1px;height:23px;background:#a6a6a6"></div>
<div class="tri" style="left:731.5px;top:240px;border-top-color:#444"></div>
<div class="t" style="left:751px;top:234px;color:#555;font-size:12px">...</div>
<svg style="left:772px;top:237px" width="10" height="9" viewBox="0 0 10 9" ><path d="M3.500 3.500H1.500V8.500H6.500V6.500" fill="none" stroke="#444" stroke-width="1.100"/><rect x="4.500" y=".5" width="5" height="5" fill="none" stroke="#444" stroke-width="1.100"/></svg>
<div class="in" style="left:150px;top:263px;width:638px;">Торговый дом ООО</div>
<div class="a" style="left:766px;top:264px;width:1px;height:23px;background:#a6a6a6"></div>
<div class="a" style="left:745px;top:264px;width:1px;height:23px;background:#a6a6a6"></div>
<div class="a" style="left:724px;top:264px;width:1px;height:23px;background:#a6a6a6"></div>
<div class="tri" style="left:731.5px;top:274px;border-top-color:#444"></div>
<div class="t" style="left:751px;top:268px;color:#555;font-size:12px">...</div>
<svg style="left:772px;top:271px" width="10" height="9" viewBox="0 0 10 9" ><path d="M3.500 3.500H1.500V8.500H6.500V6.500" fill="none" stroke="#444" stroke-width="1.100"/><rect x="4.500" y=".5" width="5" height="5" fill="none" stroke="#444" stroke-width="1.100"/></svg>
<div class="in" style="left:150px;top:297px;width:638px;color:#a0a0a0">Бухгалтерия</div>
<div class="a" style="left:766px;top:298px;width:1px;height:23px;background:#a6a6a6"></div>
<div class="a" style="left:745px;top:298px;width:1px;height:23px;background:#a6a6a6"></div>
<div class="a" style="left:724px;top:298px;width:1px;height:23px;background:#a6a6a6"></div>
<div class="tri" style="left:731.5px;top:308px;border-top-color:#444"></div>
<div class="t" style="left:751px;top:302px;color:#555;font-size:12px">...</div>
<svg style="left:772px;top:305px" width="10" height="9" viewBox="0 0 10 9" ><path d="M3.500 3.500H1.500V8.500H6.500V6.500" fill="none" stroke="#444" stroke-width="1.100"/><rect x="4.500" y=".5" width="5" height="5" fill="none" stroke="#444" stroke-width="1.100"/></svg>
<div class="in" style="left:150px;top:331px;width:82px;"></div>
<div class="a" style="left:210px;top:332px;width:1px;height:23px;background:#a6a6a6"></div>
<div class="a" style="left:210px;top:343px;width:21px;height:1px;background:#a6a6a6"></div>
<div class="t" style="left:201px;top:336px;color:#111">0</div>
<div class="tri" style="left:219px;top:336px;border-width:2px;border-bottom:2.500px solid #444;border-top:0"></div>
<div class="tri" style="left:219px;top:348px;border-width:2px;border-top-width:2.500px"></div>
<div class="t" style="left:238px;top:335px;color:#1565b0;font-size:14.500px">?</div>
<div class="a" style="left:147px;top:362px;width:645px;height:31px;border:2px solid #000;background:#fff"></div>
<div class="a" style="left:154px;top:369px;line-height:17px"><span class="sel">Кабинет 312</span></div>
<div class="a" style="left:724px;top:366px;width:1px;height:23px;background:#a6a6a6"></div>
<div class="a" style="left:745px;top:366px;width:1px;height:23px;background:#a6a6a6"></div>
<div class="a" style="left:766px;top:366px;width:1px;height:23px;background:#a6a6a6"></div>
<div class="tri" style="left:731.5px;top:376px;border-top-color:#444"></div>
<div class="t" style="left:751px;top:370px;color:#555;font-size:12px">...</div>
<svg style="left:772px;top:373px" width="10" height="9" viewBox="0 0 10 9" ><path d="M3.500 3.500H1.500V8.500H6.500V6.500" fill="none" stroke="#444" stroke-width="1.100"/><rect x="4.500" y=".5" width="5" height="5" fill="none" stroke="#444" stroke-width="1.100"/></svg>
<div class="a" style="left:150px;top:399px;width:85px;height:25px;border:1px solid #b0b0b0;border-radius:4px;background:#fff;overflow:hidden"><div class="a" style="left:0;top:0;width:40px;height:23px;background:linear-gradient(#fafafa,#e2e2e2);border-right:1px solid #b0b0b0"></div></div>
<div class="t" style="left:162px;top:404px;">Да</div>
<div class="t" style="left:202px;top:404px;color:#1565b0">Нет</div>
<div class="t" style="left:242px;top:403px;color:#1565b0;font-size:14.500px">?</div>
<div class="a" style="left:11px;top:354px;width:787px;height:43px;border:5px solid #e23a2f;border-radius:9px"></div>
</div>
<div class="a" style="left:1072px;top:792px;width:1px;height:101px;background:#c8c8c8"></div>
<div class="a" style="left:1072px;top:903px;width:1px;height:16px;background:#c8c8c8"></div>
<svg style="left:0;top:0;filter:drop-shadow(1px 1px .6px rgba(0,0,0,.32))" width="1224" height="1039" viewBox="0 0 1224 1039"><g fill="#e23a2f" stroke="#e23a2f" stroke-width="2" stroke-linejoin="round"><path d="M1092 494.500L1093 497.500L919 526.500L920.500 536L899.500 521.500L916 503.500L917.500 513.500Z"/><path d="M1102.500 523.500L1105 524.500L975.500 896L985 899L963.500 911.500L953.500 887.500L962.500 891.500Z"/></g></svg>
</body></html>
